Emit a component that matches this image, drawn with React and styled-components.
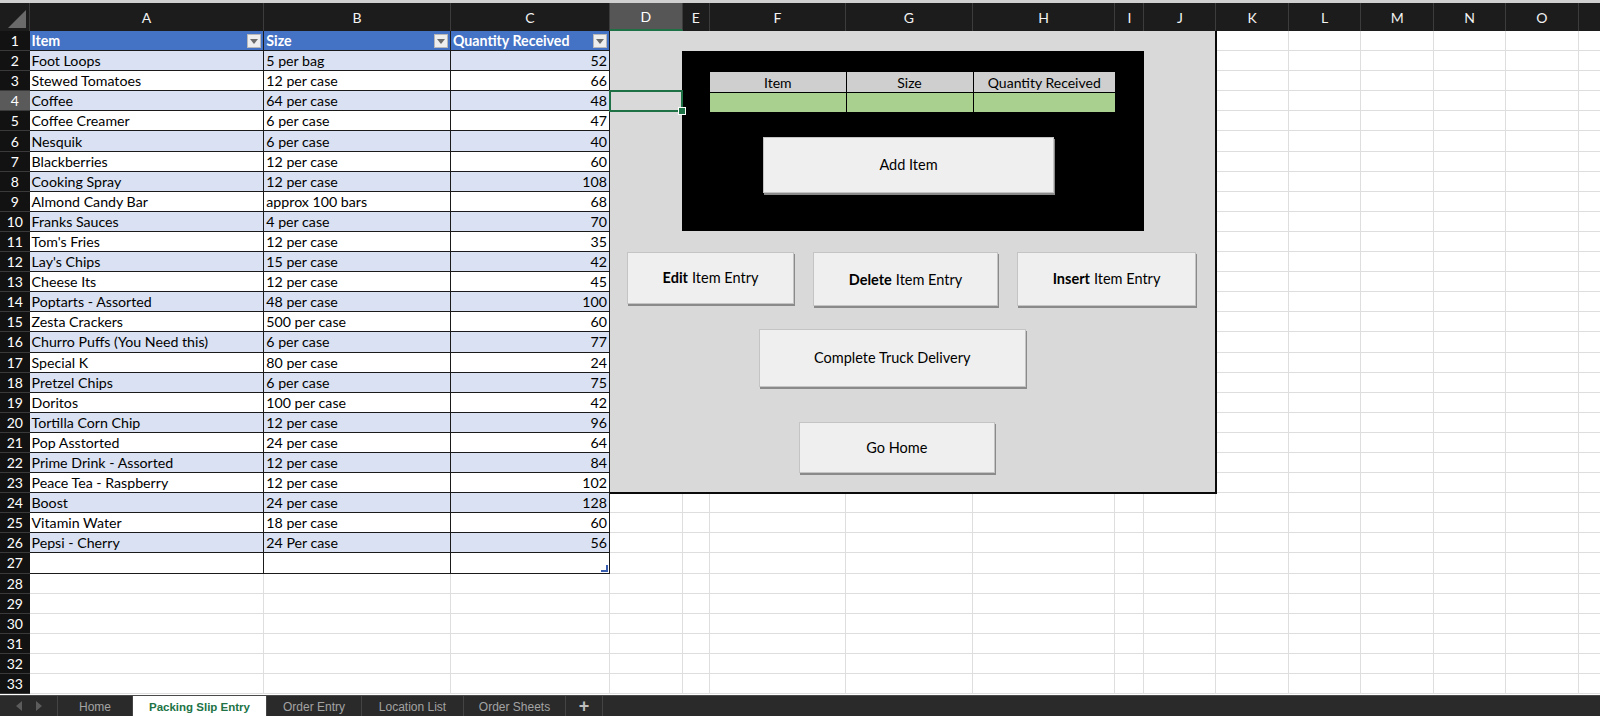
import React from "react";
import styled, { createGlobalStyle, css } from "styled-components";

const GlobalStyle = createGlobalStyle`
  html, body {
    margin: 0;
    padding: 0;
    background: #ffffff;
    overflow: hidden;
  }
  * {
    box-sizing: border-box;
  }
`;

const COLS = [29.5, 234.8, 186.7, 159, 72.6, 27.4, 136, 126.6, 142.9, 28.8, 72.2, 72.5, 72.5, 72.5, 72.3, 72.4, 72];
// P is off the right edge, so its letter is not drawn
const LETTERS = ["A", "B", "C", "D", "E", "F", "G", "H", "I", "J", "K", "L", "M", "N", "O", ""];
const ROW_COUNT = 33;

const items = [
  ["Foot Loops", "5 per bag", 52],
  ["Stewed Tomatoes", "12 per case", 66],
  ["Coffee", "64 per case", 48],
  ["Coffee Creamer", "6 per case", 47],
  ["Nesquik", "6 per case", 40],
  ["Blackberries", "12 per case", 60],
  ["Cooking Spray", "12 per case", 108],
  ["Almond Candy Bar", "approx 100 bars", 68],
  ["Franks Sauces", "4 per case", 70],
  ["Tom's Fries", "12 per case", 35],
  ["Lay's Chips", "15 per case", 42],
  ["Cheese Its", "12 per case", 45],
  ["Poptarts - Assorted", "48 per case", 100],
  ["Zesta Crackers", "500 per case", 60],
  ["Churro Puffs (You Need this)", "6 per case", 77],
  ["Special K", "80 per case", 24],
  ["Pretzel Chips", "6 per case", 75],
  ["Doritos", "100 per case", 42],
  ["Tortilla Corn Chip", "12 per case", 96],
  ["Pop Asstorted", "24 per case", 64],
  ["Prime Drink - Assorted", "12 per case", 84],
  ["Peace Tea - Raspberry", "12 per case", 102],
  ["Boost", "24 per case", 128],
  ["Vitamin Water", "18 per case", 60],
  ["Pepsi - Cherry", "24 Per case", 56],
];

const tabs = [
  { name: "Home", w: 75 },
  { name: "Packing Slip Entry", w: 134, active: true },
  { name: "Order Entry", w: 95 },
  { name: "Location List", w: 102 },
  { name: "Order Sheets", w: 102 },
];

const cellFont = `"Lato", "Open Sans", sans-serif`;

const Page = styled.div`
  width: 1600px;
  height: 716px;
  display: flex;
  flex-direction: column;
  overflow: hidden;
  font-family: ${cellFont};
`;

const TopEdge = styled.div`
  height: 3px;
  background: #d0d0d0;
  flex: none;
`;

const Sheet = styled.div`
  position: relative;
  flex: none;
  height: 691.7px;
  overflow: hidden;
`;

const Grid = styled.div`
  display: grid;
  grid-template-columns: ${COLS.map((c) => c + "px").join(" ")};
  grid-template-rows: 28px repeat(${ROW_COUNT}, 20.1px);
  width: max-content;
`;

const kinds = {
  corner: css`
    background: #1c1c1c;
    border-right: 1px solid #3a3a3a;
    position: relative;
    &::after {
      content: "";
      position: absolute;
      right: 3px;
      bottom: 3px;
      width: 0;
      height: 0;
      border-left: 18px solid transparent;
      border-bottom: 18px solid #6a6a6a;
    }
  `,
  colhead: css`
    background: #1c1c1c;
    color: #f2f2f2;
    justify-content: center;
    font-size: 14px;
    border-right: 1px solid #3c3c3c;
    padding-top: 1px;
  `,
  colheadOn: css`
    background: #565656;
    color: #ffffff;
    justify-content: center;
    font-size: 14px;
    border-right: 1px solid #3c3c3c;
    border-bottom: 2px solid #1e7145;
    padding-top: 1px;
  `,
  rowhead: css`
    background: #121212;
    color: #ffffff;
    justify-content: center;
    font-size: 14px;
    border-bottom: 1px solid #3a3a3a;
  `,
  rowheadOn: css`
    background: #5a5a5a;
    color: #ffffff;
    justify-content: center;
    font-size: 14px;
    border-bottom: 1px solid #3a3a3a;
  `,
  th: css`
    background: #4472c4;
    color: #ffffff;
    font-weight: 700;
    justify-content: space-between;
    border-right: 1px solid #1a1a1a;
    border-bottom: 1px solid #1a1a1a;
    padding: 0 2px;
  `,
  band: css`
    background: #d9e1f2;
    color: #000000;
    border-right: 1px solid #1a1a1a;
    border-bottom: 1px solid #1a1a1a;
    padding: 0 2px;
  `,
  td: css`
    background: #ffffff;
    color: #000000;
    border-right: 1px solid #1a1a1a;
    border-bottom: 1px solid #1a1a1a;
    padding: 0 2px;
  `,
  blank: css`
    background: #ffffff;
    border-right: 1px solid #dedede;
    border-bottom: 1px solid #dedede;
  `,
};

const Cell = styled.div`
  display: flex;
  align-items: center;
  font-size: 14.2px;
  white-space: nowrap;
  overflow: hidden;
  position: relative;
  ${(p) => kinds[p.$kind]}
  ${(p) => p.$right && css`justify-content: flex-end;`}
  ${(p) =>
    p.$handle &&
    css`
      &::after {
        content: "";
        position: absolute;
        right: 1px;
        bottom: 1px;
        width: 5px;
        height: 5px;
        border-right: 2px solid #3a5fb0;
        border-bottom: 2px solid #3a5fb0;
      }
    `}
`;

const FilterButton = styled.span`
  flex: none;
  width: 14px;
  height: 14px;
  background: #eeeeee;
  border: 1px solid #b8b8b8;
  display: flex;
  align-items: center;
  justify-content: center;
  &::before {
    content: "";
    border-left: 4px solid transparent;
    border-right: 4px solid transparent;
    border-top: 5px solid #6c6c6c;
    margin-top: 1px;
  }
`;

const Selection = styled.div`
  position: absolute;
  left: 609px;
  top: 87px;
  width: 74px;
  height: 21.5px;
  border: 2px solid #1e7145;
  z-index: 3;
  &::after {
    content: "";
    position: absolute;
    right: -5px;
    bottom: -5px;
    width: 6px;
    height: 6px;
    background: #1e7145;
    border: 1px solid #ffffff;
  }
`;

const Panel = styled.div`
  position: absolute;
  left: 610px;
  top: 28px;
  width: 607px;
  height: 463px;
  background: #d9d9d9;
  border-right: 2px solid #0a0a0a;
  border-bottom: 2px solid #0a0a0a;
  z-index: 2;
  display: flex;
  flex-direction: column;
  align-items: flex-start;
  padding-top: 20px;
`;

const BlackBox = styled.div`
  margin-left: 72px;
  width: 462px;
  height: 180px;
  background: #000000;
  display: flex;
  flex-direction: column;
  align-items: flex-start;
  padding: 20.5px 0 0 28px;
`;

const MiniTable = styled.div`
  display: grid;
  grid-template-columns: 135.5px 126px 141.5px;
  grid-template-rows: 20px 19.5px;
  gap: 1px;
  background: #000000;
`;

const MiniCell = styled.div`
  background: ${(p) => (p.$green ? "#a9d08e" : "#cfcfcf")};
  color: #000000;
  font-size: 14px;
  display: flex;
  align-items: center;
  justify-content: center;
  padding-top: 1px;
`;

const Button = styled.div`
  flex: none;
  width: ${(p) => p.$w}px;
  height: ${(p) => p.$h}px;
  margin-left: ${(p) => p.$left || 0}px;
  margin-top: ${(p) => p.$top || 0}px;
  background: #efefef;
  border: 1px solid #c4c4c4;
  box-shadow: 1px 2px 0 #8a8a8a;
  display: flex;
  align-items: center;
  justify-content: center;
  color: #000000;
  font-size: 14.5px;
  font-family: ${cellFont};
  b {
    font-weight: 700;
    margin-right: 4px;
  }
`;

const ButtonRow = styled.div`
  display: flex;
  align-items: flex-start;
  margin-top: 21px;
`;

const TabBar = styled.div`
  flex: 1;
  background: #2a2a2a;
  border-top: 1px solid #4a4a4a;
  display: flex;
  align-items: stretch;
  font-family: "Liberation Sans", Arial, sans-serif;
`;

const NavArrows = styled.div`
  width: 58px;
  display: flex;
  align-items: center;
  justify-content: center;
  gap: 14px;
  border-right: 1px solid #444444;
  span {
    width: 0;
    height: 0;
    border-top: 5px solid transparent;
    border-bottom: 5px solid transparent;
  }
  span:first-child {
    border-right: 6px solid #5c5c5c;
  }
  span:last-child {
    border-left: 6px solid #5c5c5c;
  }
`;

const Tab = styled.div`
  width: ${(p) => p.$w}px;
  display: flex;
  align-items: center;
  justify-content: center;
  font-size: 12px;
  color: #a3a3a3;
  border-right: 1px solid #444444;
  padding-top: 1px;
  ${(p) =>
    p.$active &&
    css`
      background: #ffffff;
      color: #217346;
      font-weight: 700;
      font-size: 11.5px;
    `}
`;

const AddTab = styled.div`
  width: 37px;
  display: flex;
  align-items: center;
  justify-content: center;
  color: #bdbdbd;
  font-size: 18px;
  font-weight: 700;
  border-right: 1px solid #444444;
`;

function tableCell(r, c) {
  // r is the sheet row (1-based), c the column among A, B, C
  if (r === 1) {
    const head = ["Item", "Size", "Quantity Received"][c];
    return (
      <Cell key={`${r}-${c}`} $kind="th">
        <span>{head}</span>
        <FilterButton />
      </Cell>
    );
  }
  const data = items[r - 2];
  const kind = r % 2 === 0 && data ? "band" : "td";
  const value = data ? data[c] : "";
  return (
    <Cell key={`${r}-${c}`} $kind={kind} $right={c === 2} $handle={r === 27 && c === 2}>
      {value}
    </Cell>
  );
}

function SheetGrid() {
  const cells = [];
  cells.push(<Cell key="corner" $kind="corner" />);
  LETTERS.forEach((l, i) =>
    cells.push(
      <Cell key={`h-${i}`} $kind={l === "D" ? "colheadOn" : "colhead"}>
        {l}
      </Cell>
    )
  );
  for (let r = 1; r <= ROW_COUNT; r++) {
    cells.push(
      <Cell key={`r-${r}`} $kind={r === 4 ? "rowheadOn" : "rowhead"}>
        {r}
      </Cell>
    );
    LETTERS.forEach((l, c) => {
      if (c < 3 && r <= 27) cells.push(tableCell(r, c));
      else cells.push(<Cell key={`${r}-${c}`} $kind="blank" />);
    });
  }
  return <Grid>{cells}</Grid>;
}

export default function App() {
  return (
    <Page>
      <GlobalStyle />
      <TopEdge />
      <Sheet>
        <SheetGrid />
        <Panel>
          <BlackBox>
            <MiniTable>
              <MiniCell>Item</MiniCell>
              <MiniCell>Size</MiniCell>
              <MiniCell>Quantity Received</MiniCell>
              <MiniCell $green />
              <MiniCell $green />
              <MiniCell $green />
            </MiniTable>
            <Button $w={291} $h={56} $left={53} $top={24.5}>
              Add Item
            </Button>
          </BlackBox>
          <ButtonRow>
            <Button $w={167} $h={51.6} $left={17}>
              <b>Edit</b>Item Entry
            </Button>
            <Button $w={185} $h={54.3} $left={19}>
              <b>Delete</b>Item Entry
            </Button>
            <Button $w={179} $h={53.6} $left={19}>
              <b>Insert</b>Item Entry
            </Button>
          </ButtonRow>
          <Button $w={267.5} $h={58.7} $left={148.5} $top={22.3}>
            Complete Truck Delivery
          </Button>
          <Button $w={195.5} $h={50.6} $left={189} $top={34.7}>
            Go Home
          </Button>
        </Panel>
        <Selection />
      </Sheet>
      <TabBar>
        <NavArrows>
          <span />
          <span />
        </NavArrows>
        {tabs.map((t) => (
          <Tab key={t.name} $w={t.w} $active={t.active}>
            {t.name}
          </Tab>
        ))}
        <AddTab>+</AddTab>
      </TabBar>
    </Page>
  );
}
